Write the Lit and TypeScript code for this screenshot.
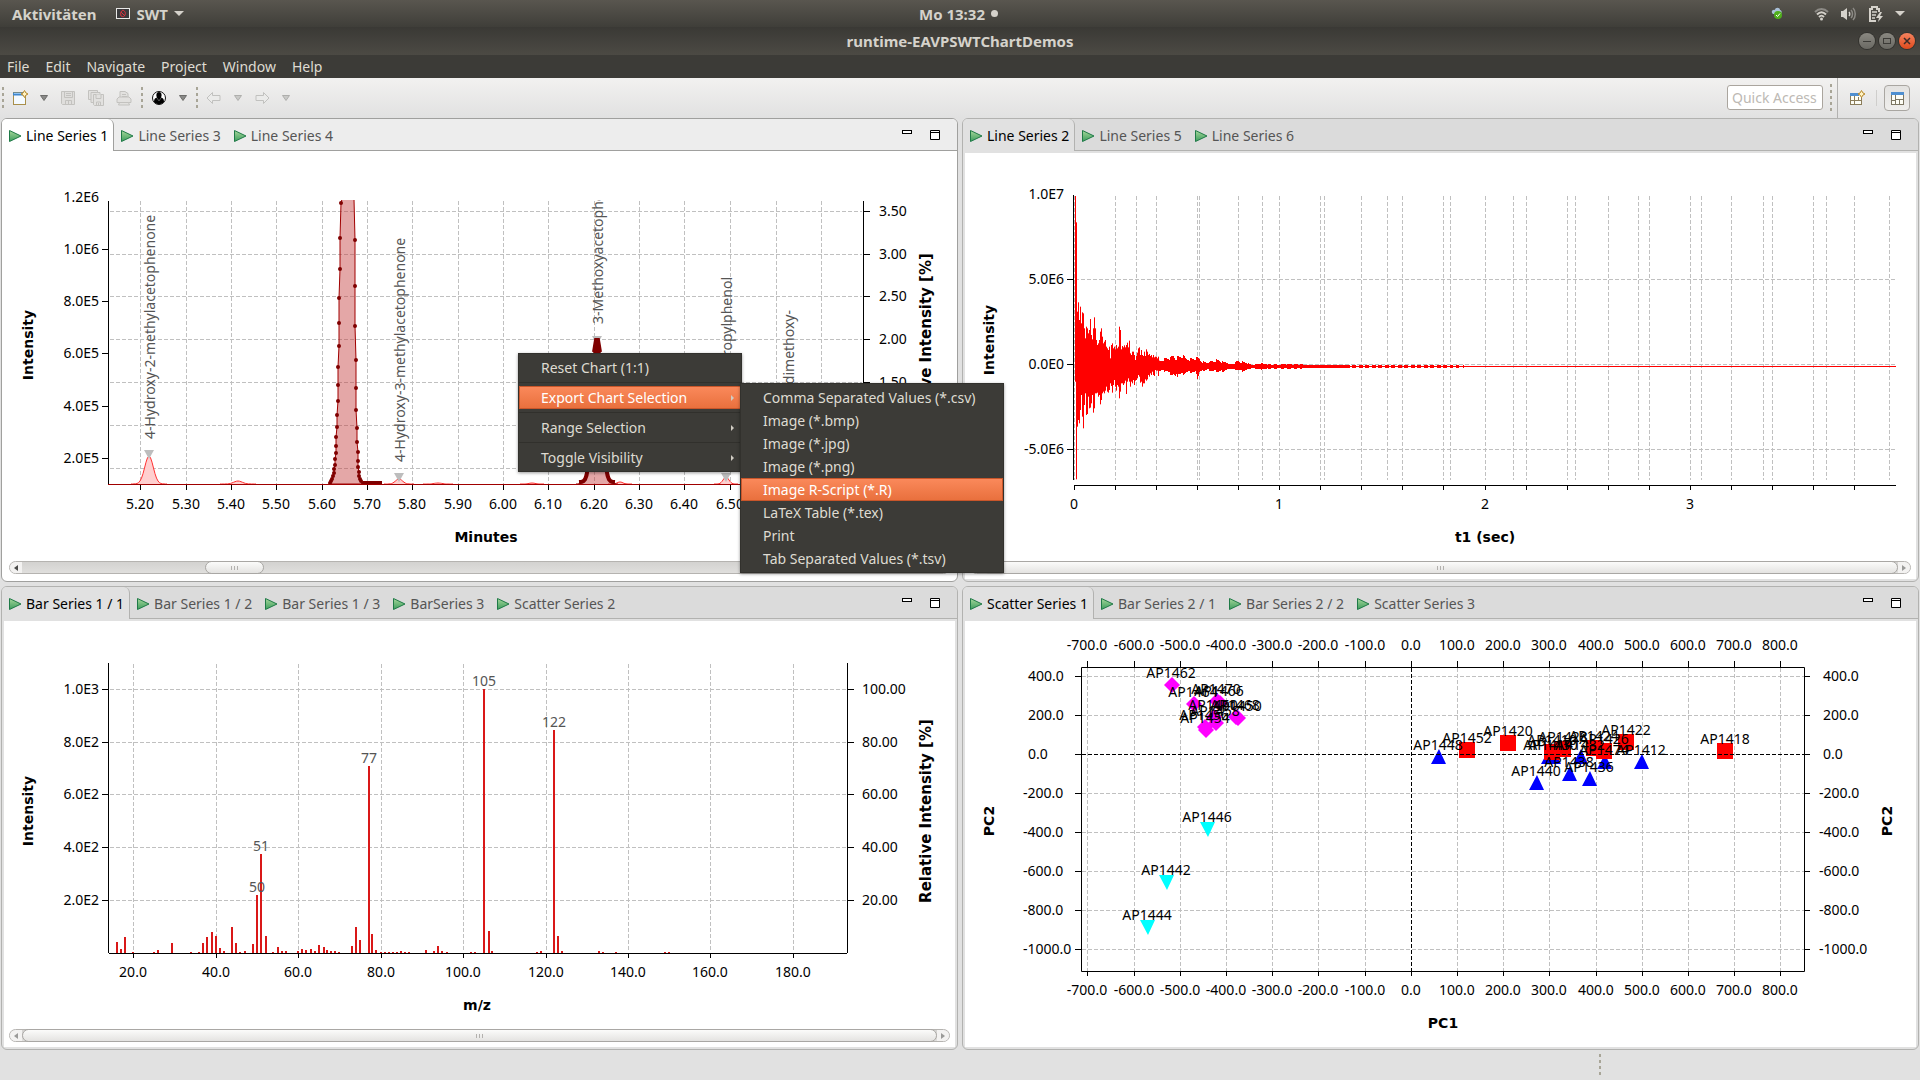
import { LitElement, html, svg, css, nothing } from "lit";
import type { TemplateResult, SVGTemplateResult } from "lit";
import { customElement } from "lit/decorators.js";
import { classMap } from "lit/directives/class-map.js";

type Pt = [number, number];

/* ---------- shared drawing helpers ---------- */

const vline = (x: number, y1: number, y2: number) => `M${x + 0.5} ${y1}V${y2}`;
const hline = (y: number, x1: number, x2: number) => `M${x1} ${y + 0.5}H${x2}`;
const verticals = (xs: number[], y1: number, y2: number) => xs.map((x) => vline(x, y1, y2)).join("");
const horizontals = (ys: number[], x1: number, x2: number) => ys.map((y) => hline(y, x1, x2)).join("");

const label = (x: number, y: number, text: string, cls = "mid") =>
  svg`<text class=${cls} x=${x} y=${y}>${text}</text>`;
const upright = (x: number, y: number, text: string, cls: string) =>
  svg`<text class=${cls} transform="translate(${x} ${y}) rotate(-90)">${text}</text>`;

const bell = (cx: number, top: number, base: number, spread: number) => {
  let d = `M${cx - spread * 3} ${base}`;
  for (let i = -12; i <= 12; i++) {
    const t = i / 4;
    d += `L${cx + t * spread} ${(base - (base - top) * Math.exp(-t * t)).toFixed(1)}`;
  }
  return d + `L${cx + spread * 3} ${base}`;
};

/* ---------- line chart: chromatogram ---------- */

const PEAK_LEFT: Pt[] = [
  [341, 203], [340, 238], [340, 269], [339, 298], [339, 323], [339, 346], [338, 367], [338, 385],
  [338, 401], [337, 415], [337, 427], [336, 437], [336, 446], [336, 453], [335, 459], [335, 465],
  [334, 469], [334, 473], [333, 476], [332, 479], [331, 481], [330, 483],
];
const PEAK_RIGHT: Pt[] = [
  [355, 240], [355, 286], [355, 326], [356, 360], [356, 388], [356, 410], [357, 428], [357, 442],
  [358, 452], [358, 461], [358, 467], [359, 472], [359, 476], [360, 479], [361, 481], [363, 483],
];
const toPath = (pts: Pt[]) => pts.map((p) => p.join(" ")).join("L");

const chromatogram = (): TemplateResult => {
  const xs = [140, 186, 231, 276, 322, 367, 412, 458, 503, 548, 594, 639, 684, 730, 776, 821];
  const ys = [211, 254, 296, 339, 382, 425, 468];
  const left: [string, number][] = [["1.0E6", 249], ["8.0E5", 301], ["6.0E5", 353], ["4.0E5", 406], ["2.0E5", 458]];
  const small: [number, number, number][] = [[149, 456, 6], [238, 481, 6], [399, 479, 5], [438, 483, 5], [532, 483, 4], [620, 482, 4], [726, 477, 4]];
  const flags: Pt[] = [[149, 450], [399, 473], [597, 336], [726, 473]];
  return html`<svg class="chart" viewBox="9 153 941 408" role="img" aria-label="Line Series 1">
    <clipPath id="plot1"><rect x="108" y="200" width="756" height="286" /></clipPath>
    <path class="grid" d=${verticals(xs, 201, 484) + horizontals(ys, 110, 862)} />
    <path class="axis" d=${vline(108, 201, 484) + vline(863, 201, 485) + hline(484, 109, 863) +
      verticals(xs, 485, 490) + horizontals(left.map((l) => l[1]), 102, 108) + horizontals(ys, 864, 870)} />
    <g clip-path="url(#plot1)">
      ${small.map(([x, y, w]) => svg`<path class="bump" d=${bell(x, y, 484, w)} />`)}
      <path class="peak" d="M330 484L${toPath([...PEAK_LEFT].reverse())}L342 199H354L${toPath(PEAK_RIGHT)}L365 484Z" />
      ${[...PEAK_LEFT, ...PEAK_RIGHT].map(([x, y]) => svg`<circle class="dot" cx=${x} cy=${y} r="2" />`)}
      <path class="thick" d="M363 483H382" />
      <path class="peak" d=${bell(597, 338, 484, 7)} />
      <path class="thick" d=${bell(597, 340, 482, 6)} />
      <path class="base" d="M108 484.500H864" />
    </g>
    ${flags.map(([x, y]) => svg`<path class="flag" d="M${x - 5} ${y}h10l-5 9z" />`)}
    <path class="thick" d="M594 352L596 340H598L600 352" />
    ${label(99, 202, "1.2E6", "end")}
    ${left.map(([t, y]) => label(99, y + 5, t, "end"))}
    ${xs.slice(0, 14).map((x, i) => label(x, 509, (5.2 + i / 10).toFixed(2)))}
    ${ys.map((y, i) => label(879, y + 5, (3.5 - i / 2).toFixed(2), "start"))}
    ${upright(155, 439, "4-Hydroxy-2-methylacetophenone", "note start")}
    ${upright(405, 462, "4-Hydroxy-3-methylacetophenone", "note start")}
    <g clip-path="url(#plot1)">${upright(603, 324, "3-Methoxyacetophenone", "note start")}</g>
    ${upright(732, 277, "propylphenol", "note end")}
    ${upright(794, 310, "dimethoxy-", "note end")}
    ${label(486, 542, "Minutes", "title")}
    ${upright(33, 345, "Intensity", "title")}
    ${upright(931, 345, "Relative Intensity [%]", "title wide")}
  </svg>`;
};

/* ---------- line chart: free induction decay ---------- */

/* Upper and lower reach of the signal, in thirds of a pixel from the baseline, one pair per pixel column. */
const FID_HEAD: Pt[] = [
  [510, 47], [431, 340], [163, 182], [191, 162], [138, 172], [178, 132], [128, 87], [161, 152], [158, 187], [113, 117],
  [83, 82], [118, 147], [113, 144], [98, 92], [108, 127], [141, 125], [93, 112], [80, 87], [113, 140], [146, 127],
  [113, 82], [78, 82], [63, 80], [68, 92], [78, 87], [103, 115], [113, 102], [88, 82], [68, 77], [73, 82],
  [78, 74], [58, 62], [53, 77], [48, 80], [58, 72], [23, 52], [63, 60], [68, 80], [53, 57], [58, 42],
  [50, 62], [63, 74], [53, 57], [58, 62], [118, 97], [108, 77], [50, 52], [60, 52], [56, 57], [62, 52],
  [56, 44], [63, 84], [70, 47], [56, 37], [76, 47], [38, 62], [33, 47], [43, 52], [43, 42], [33, 57],
  [18, 44], [30, 42], [40, 37], [53, 27], [56, 32], [33, 50], [48, 47], [33, 62], [30, 52], [43, 52],
  [30, 40], [50, 44], [43, 40], [33, 27], [36, 32], [30, 22], [33, 27], [26, 17], [33, 27], [26, 30],
  [28, 12], [28, 14], [23, 14], [28, 30], [16, 14],
];
/* Envelope of the fading part: x, upper and lower reach in thirds of a pixel. */
const FID_TAIL: [number, number, number][] = [
  [1159, 18, 14], [1163, 23, 14], [1166, 28, 14], [1170, 28, 25], [1173, 38, 27], [1175, 28, 42], [1178, 33, 24],
  [1182, 36, 27], [1186, 26, 20], [1191, 26, 19], [1196, 27, 20], [1197, 30, 39], [1199, 25, 20], [1202, 15, 14],
  [1207, 11, 10], [1212, 17, 15], [1218, 22, 17], [1222, 14, 16], [1227, 14, 11], [1229, 6, 6], [1234, 9, 8],
  [1237, 18, 12], [1242, 14, 15], [1246, 13, 12], [1249, 5, 5], [1262, 9, 8], [1272, 5, 5], [1290, 7, 6],
  [1310, 4, 4], [1345, 4, 4], [1350, 2, 2], [1450, 2, 2], [1480, 1, 1],
];

const fadingColumns = () => {
  let d = "";
  for (let i = 1; i < FID_TAIL.length; i++) {
    const [x0, u0, d0] = FID_TAIL[i - 1];
    const [x1, u1, d1] = FID_TAIL[i];
    for (let x = x0; x < x1; x++) {
      const t = (x - x0) / (x1 - x0);
      const jitter = 1 - ((x * 7919) % 13) / 30;
      const up = Math.round(((u0 + (u1 - u0) * t) * jitter) / 3);
      const down = Math.round(((d0 + (d1 - d0) * t) * jitter) / 3);
      d += `M${x + 0.5} ${366 - up}V${367 + down}`;
    }
  }
  return d;
};

const decay = (): TemplateResult => {
  const xs = [1074, 1115, 1156, 1197, 1238, 1279, 1320, 1361, 1402, 1443, 1485, 1526, 1567, 1608, 1649, 1690, 1731, 1772, 1813, 1854];
  const extra = [1136, 1199, 1262, 1324, 1387, 1450, 1513, 1575, 1638, 1701, 1763, 1826, 1889];
  const ys: [string, number][] = [["5.0E6", 279], ["0.0E0", 364], ["-5.0E6", 449]];
  const head = FID_HEAD.map(([u, d], i) => `M${1075.5 + i} ${366 - u / 3}V${366 + d / 3}`).join("");
  return html`<svg class="chart" viewBox="970 153 941 408" role="img" aria-label="Line Series 2">
    <path class="grid" d=${verticals([...xs, ...extra], 196, 480) + horizontals(ys.map((y) => y[1]), 1075, 1895)} />
    <path class="fid" d=${head + fadingColumns() + hline(366, 1075, 1896)} />
    <path class="axis" d=${vline(1073, 195, 480) + hline(485, 1074, 1896) + verticals(xs, 486, 490) +
      horizontals(ys.map((y) => y[1]), 1067, 1073)} />
    ${label(1064, 199, "1.0E7", "end")}
    ${ys.map(([t, y]) => label(1064, y + 5, t, "end"))}
    ${[0, 1, 2, 3].map((n) => label(xs[n * 5], 509, String(n)))}
    ${label(1485, 542, "t1 (sec)", "title")}
    ${upright(994, 340, "Intensity", "title")}
  </svg>`;
};

/* ---------- bar chart: mass spectrum ---------- */

const BARS: Pt[] = [
  [117, 11], [121, 4], [125, 16], [133, 1], [154, 1], [158, 3], [172, 10], [191, 1], [199, 1], [203, 10], [207, 16],
  [212, 21], [216, 17], [220, 5], [224, 2], [232, 26], [236, 10], [240, 1], [245, 2], [253, 9], [257, 58], [261, 99],
  [266, 17], [273, 1], [278, 6], [282, 2], [286, 2], [298, 2], [302, 4], [306, 3], [311, 4], [315, 2], [319, 8],
  [324, 6], [327, 3], [331, 2], [335, 2], [339, 1], [352, 7], [356, 26], [360, 13], [369, 187], [372, 19], [376, 3],
  [381, 1], [385, 1], [389, 1], [393, 1], [397, 1], [401, 2], [405, 1], [409, 1], [426, 3], [434, 2], [438, 7],
  [442, 2], [447, 1], [471, 1], [475, 1], [484, 264], [489, 22], [492, 2], [537, 1], [541, 2], [554, 223], [558, 17],
  [562, 2], [599, 2], [603, 1], [616, 1], [665, 1], [669, 1],
];

const spectrum = (): TemplateResult => {
  const xs = [133, 216, 298, 381, 463, 546, 628, 710, 793];
  const ys = [689, 742, 794, 847, 900];
  const left = ["1.0E3", "8.0E2", "6.0E2", "4.0E2", "2.0E2"];
  const tags: [string, number, number][] = [["50", 257, 892], ["51", 261, 851], ["77", 369, 763], ["105", 484, 686], ["122", 554, 727]];
  return html`<svg class="chart" viewBox="9 621 941 408" role="img" aria-label="Bar Series 1 / 1">
    <path class="grid" d=${verticals(xs, 664, 952) + horizontals(ys, 110, 846)} />
    ${BARS.map(([x, h]) => svg`<rect class="bar" x=${x - 1} y=${953 - h} width="2" height=${h} />`)}
    <path class="axis" d=${vline(108, 663, 953) + vline(847, 663, 953) + hline(953, 109, 847) + verticals(xs, 954, 958) +
      horizontals(ys, 102, 108) + horizontals(ys, 848, 854)} />
    ${tags.map(([t, x, y]) => label(x, y, t, "note mid"))}
    ${xs.map((x, i) => label(x, 977, (20 + i * 20).toFixed(1)))}
    ${ys.map((y, i) => label(99, y + 5, left[i], "end"))}
    ${ys.map((y, i) => label(862, y + 5, (100 - i * 20).toFixed(2), "start"))}
    ${label(477, 1010, "m/z", "title")}
    ${upright(33, 811, "Intensity", "title")}
    ${upright(931, 811, "Relative Intensity [%]", "title wide")}
  </svg>`;
};

/* ---------- scatter chart: principal components ---------- */

type Mark = [string, number, number];
const DOWN: Mark[] = [["AP1446", 1207, 829], ["AP1442", 1166, 882], ["AP1444", 1147, 927]];
const DIAMOND: Mark[] = [
  ["AP1462", 1171, 685], ["AP1464", 1193, 704], ["AP1470", 1216, 701], ["AP1466", 1219, 703], ["AP1460", 1213, 717],
  ["AP1468", 1235, 717], ["AP1450", 1237, 718], ["AP1458", 1215, 723], ["AP1456", 1204, 727], ["AP1454", 1205, 730],
];
const UP: Mark[] = [
  ["AP1448", 1438, 757], ["AP1440", 1536, 783], ["AP1438", 1569, 774], ["AP1436", 1589, 779], ["AP1412", 1641, 762],
  ["AP1432", 1580, 757], ["AP1474", 1604, 762], ["AP1414", 1548, 757], ["AP1430", 1553, 757],
];
const SQUARE: Mark[] = [
  ["AP1452", 1467, 750], ["AP1420", 1508, 743], ["AP1422", 1626, 742], ["AP1418", 1725, 751], ["AP1410", 1552, 752],
  ["AP1428", 1563, 749], ["AP1424", 1594, 748], ["AP1426", 1604, 751],
];

const scatter = (): TemplateResult => {
  const xs = [1087, 1134, 1180, 1226, 1272, 1318, 1365, 1411, 1457, 1503, 1549, 1596, 1642, 1688, 1734, 1780];
  const ys = [676, 715, 754, 793, 832, 871, 910, 949];
  const yText = (i: number) => (400 - i * 200).toFixed(1);
  const shape = (marks: Mark[], cls: string, d: string): SVGTemplateResult[] =>
    marks.map(([, x, y]) => svg`<path class=${cls} d="M${x} ${y}${d}" />`);
  return html`<svg class="chart" viewBox="970 621 941 421" role="img" aria-label="Scatter Series 1">
    <path class="grid" d=${verticals(xs, 668, 971) + horizontals(ys, 1082, 1804)} />
    ${shape(DOWN, "cyan", "m-7 -7h15l-7 15z")}
    ${shape(DIAMOND, "magenta", "m-7 0l8 -8l8 8l-8 8z")}
    ${shape(UP, "blue", "m-7 7h15l-7 -15z")}
    ${shape(SQUARE, "red", "m-8 -8h16v16h-16z")}
    <path class="zero" d=${vline(1411, 668, 971) + hline(754, 1082, 1804)} />
    <path class="axis" d=${"M1081.500 667.500H1804.500V971.500H1081.500Z" + verticals(xs, 661, 667) + verticals(xs, 972, 976) +
      horizontals(ys, 1075, 1081) + horizontals(ys, 1805, 1810)} />
    ${[...DOWN, ...DIAMOND, ...UP, ...SQUARE].map(([t, x, y]) => label(x, y - 7, t))}
    ${xs.map((x, i) => label(x, 650, (i * 100 - 700).toFixed(1)))}
    ${xs.map((x, i) => label(x, 995, (i * 100 - 700).toFixed(1)))}
    ${ys.map((y, i) => label(i < 3 ? 1028 : 1023, y + 5, yText(i), "start"))}
    ${ys.map((y, i) => label(i < 3 ? 1823 : 1819, y + 5, yText(i), "start"))}
    ${label(1443, 1028, "PC1", "title")}
    ${upright(994, 821, "PC2", "title")}
    ${upright(1892, 821, "PC2", "title")}
  </svg>`;
};

/* ---------- icons ---------- */

const icon = (body: SVGTemplateResult, w = 16, h = 16) =>
  html`<svg class="icon" width=${w} height=${h} viewBox="0 0 ${w} ${h}" aria-hidden="true">${body}</svg>`;

const PLUS = svg`<path d="M12.500 .5l1.500 2.500 2 1-2 1-1.500 2.500-1.500-2.500-2-1 2-1z" fill="#fff3c4" stroke="#b8892a" />`;

const icons = {
  play: icon(svg`<path d="M.5 .5V11.500L12 6z" fill="url(#pg)" stroke="#1f7a47" />
    <linearGradient id="pg" x1="0" y1="0" x2="0" y2="1"><stop offset="0" stop-color="#a5d69a" /><stop offset="1" stop-color="#3c9d5d" /></linearGradient>`, 13, 12),
  caret: icon(svg`<path d="M1.500 .5h7L5 5.500z" fill="#8a8a88" stroke="#6d6d6b" />`, 10, 6),
  caretOff: icon(svg`<path d="M1.500 .5h7L5 5.500z" fill="#c9c9c7" stroke="#aeaeac" />`, 10, 6),
  fresh: icon(svg`<rect x="1.500" y="2.500" width="12" height="12" fill="#f4faff" stroke="#a98f4a" />
    <path d="M1 2.500h10v3H1z" fill="#3f87cf" /><path d="M2 3.500h8" stroke="#8fc2f2" />${PLUS}`),
  save: icon(svg`<g fill="none" stroke="#c3c2bf"><path d="M1.500 1.500h13v13h-12l-1-1z" fill="#dfdedc" />
    <path d="M4.500 1.500v6h8v-6M6 3.500h5M6 5.500h5M5.500 14.500v-4h6v4M8.500 11v3" /></g>`),
  saveAll: icon(svg`<g fill="#e2e1df" stroke="#c3c2bf"><path d="M.5 .5h9v9h-9z" /><path d="M3 2.500h9v10h-9z" /><path d="M5.500 4.500h10v11h-9l-1-1z" />
    <path d="M8 4.500v4h5v-4M8.500 15v-3h4v3M10.500 13v2" /></g>`),
  print: icon(svg`<g fill="#e2e1df" stroke="#c3c2bf"><path d="M4 7.500v-6h5l3 2v4" /><path d="M6 4.500h4M6 6.500h5" />
    <path d="M1 9l2-2h10l2 2v3.500h-14z" /><path d="M3.500 12.500h9l1 2.500h-11z" /></g>`),
  user: icon(svg`<circle cx="8" cy="8" r="6.500" fill="#fff" stroke="#111" />
    <path d="M3 12c0-3 1-4 3-4.500C5 6 5 2 8 2s3 4 2 5.500c2 .5 3 1.500 3 4.500-3 3-7 3-10 0z" fill="#000" />
    <path d="M6 8l2 3 2-3" fill="none" stroke="#555" />`),
  back: icon(svg`<path d="M1 8l5.500-5.500v3h7.500v5H6.500v3z" fill="#ebebea" stroke="#c1c1bf" />`),
  forward: icon(svg`<path d="M15 8L9.500 2.500v3H2v5h7.500v3z" fill="#ebebea" stroke="#c1c1bf" />`),
  openPersp: icon(svg`<rect x="1.500" y="3.500" width="11" height="11" fill="#fdfdf5" stroke="#8b7d5a" />
    <path d="M1 3h9v3H1z" fill="#4f8fd0" /><path d="M5.500 6v8M1.500 10.500h11M9.500 7v3" stroke="#8b7d5a" />${PLUS}`),
  persp: icon(svg`<rect x=".5" y=".5" width="12" height="12" fill="#fdfdf5" stroke="#7d7763" />
    <path d="M0 0h13v3H0z" fill="#4f8fd0" /><path d="M4.500 3v9M8.500 7v5M4.500 7.500h8M0 8.500h4" stroke="#7d7763" />`, 13, 13),
  min: icon(svg`<rect x=".5" y=".5" width="9" height="3" fill="#fff" stroke="#000" />`, 10, 10),
  max: icon(svg`<path d="M.5 .5h9v9h-9zM0 2.500h10" fill="#fff" stroke="#000" />`, 10, 10),
  app: icon(svg`<rect x=".5" y=".5" width="13" height="10" fill="#3a3a3c" stroke="#e8e8e6" />
    <path d="M7 2c-2 1-3 3-2 6 2 1 3 1 4-1s0-4-2-5zM5 4l4 4" fill="none" stroke="#d8323c" />`, 14, 11),
  drop: icon(svg`<path d="M0 0h10L5 5z" fill="#d5d2cb" />`, 10, 5),
  cloud: icon(svg`<path d="M1 6c-1-3 2-4 3-3 0-3 5-3 5 0 2 0 2 3 1 4H2z" fill="#a9c0d8" /><circle cx="7" cy="8" r="4" fill="#4fae1c" />
    <path d="M5 8l1.500 1.500L9 6.500" fill="none" stroke="#fff" />`, 12, 13),
  wifi: icon(svg`<g fill="none" stroke-width="2"><path d="M1 5c4-4 9-4 13 0" stroke="#8c8a85" /><path d="M3 7.500c3-3 6-3 9 0M5 10c2-2 3-2 5 0" stroke="#d5d2cb" /></g>
    <circle cx="7.500" cy="12" r="1.500" fill="#d5d2cb" />`, 15, 14),
  sound: icon(svg`<path d="M1 4h2l4-3v12l-4-3H1z" fill="#d5d2cb" /><path d="M9 5c1 1 1 3 0 4" fill="none" stroke="#d5d2cb" stroke-width="1.500" />
    <path d="M11 3c2 2 2 6 0 8M13 1c3 3 3 9 0 12" fill="none" stroke="#8c8a85" stroke-width="1.500" />`, 16, 14),
  battery: icon(svg`<g transform="translate(2 0)"><path d="M7 15H1V3h2V1h5v2h2v3" fill="none" stroke="#d5d2cb" stroke-width="2" />
    <path d="M3 6h5M3 9h4M3 12h3" stroke="#d5d2cb" stroke-width="1.500" /><path d="M11 6L7 12h3l-1 4 5-6h-3l2-4z" fill="#d5d2cb" /></g>`, 17, 16),
  arrow: icon(svg`<path d="M0 0v6l3-3z" fill="#d0ccc3" />`, 3, 6),
  left: icon(svg`<path d="M4 0v6L0 3z" fill="currentColor" />`, 4, 6),
  right: icon(svg`<path d="M0 0v6l4-3z" fill="currentColor" />`, 4, 6),
  wmin: icon(svg`<path d="M4 8.500h8" stroke="#3c3b37" stroke-width="1" />`),
  wmax: icon(svg`<rect x="4.500" y="5.500" width="7" height="5" fill="none" stroke="#3c3b37" />`),
  wclose: icon(svg`<path d="M5 5l6 6M11 5l-6 6" stroke="#3c2b27" stroke-width="1.500" />`),
};

/* ---------- application ---------- */

interface View {
  tabs: string[];
  active?: boolean;
  scroll?: "zoomed" | "full";
  chart: () => TemplateResult;
}

const VIEWS: View[] = [
  { tabs: ["Line Series 1", "Line Series 3", "Line Series 4"], active: true, scroll: "zoomed", chart: chromatogram },
  { tabs: ["Line Series 2", "Line Series 5", "Line Series 6"], scroll: "full", chart: decay },
  { tabs: ["Bar Series 1 / 1", "Bar Series 1 / 2", "Bar Series 1 / 3", "BarSeries 3", "Scatter Series 2"], scroll: "full", chart: spectrum },
  { tabs: ["Scatter Series 1", "Bar Series 2 / 1", "Bar Series 2 / 2", "Scatter Series 3"], chart: scatter },
];

const EXPORTS = [
  "Comma Separated Values (*.csv)", "Image (*.bmp)", "Image (*.jpg)", "Image (*.png)", "Image R-Script (*.R)",
  "LaTeX Table (*.tex)", "Print", "Tab Separated Values (*.tsv)",
];

@customElement("app-root")
export class AppRoot extends LitElement {
  static styles = css`
    :host {
      display: flex;
      flex-direction: column;
      height: 100vh;
      position: relative;
      overflow: hidden;
      background: #e1e1e1;
      font: 14px/20px "Noto Sans", sans-serif;
      color: #000;
    }
    * { box-sizing: border-box; }
    button { font: inherit; color: inherit; border: 0; background: none; padding: 0; margin: 0; }
    .icon { display: block; flex: none; }

    .topbar {
      display: grid;
      grid-template-columns: 1fr auto 1fr;
      align-items: center;
      height: 27px;
      padding: 0 15px 0 12px;
      background: linear-gradient(#59564f, #3f3e39);
      color: #d5d2cb;
      font-size: 15px;
      font-weight: 700;
    }
    .topbar button { display: flex; align-items: center; gap: 6px; }
    .apps, .tray { display: flex; align-items: center; }
    .apps { gap: 20px; }
    .clock::after { content: ""; width: 7px; height: 7px; border-radius: 4px; background: #d5d2cb; }
    .tray { justify-content: flex-end; gap: 11px; }
    .tray .sync { margin-right: 20px; }
    .titlebar {
      display: grid;
      grid-template-columns: 1fr auto 1fr;
      align-items: center;
      height: 28px;
      padding: 0 5px;
      background: linear-gradient(#3a3935, #4c4a44);
      color: #d5d2cb;
      font-size: 15px;
      font-weight: 700;
    }
    .titlebar h1 { font: inherit; margin: 0; grid-column: 2; }
    .wbuttons { display: flex; justify-content: flex-end; gap: 4px; }
    .wbuttons button { width: 16px; height: 16px; border-radius: 8px; background: linear-gradient(#8a8881, #6a6963); box-shadow: 0 0 0 1px #33322e; }
    .wbuttons .close { background: linear-gradient(#f5835f, #df4a1c); }

    .menubar { display: flex; gap: 16px; height: 23px; padding: 0 7px; align-items: center; background: #3c3b37; color: #dfdbd2; }

    .toolbar {
      display: flex;
      align-items: center;
      height: 40px;
      padding-right: 10px;
      background: linear-gradient(#f2f1f0, #e1e1e1);
    }
    .tool { width: 28px; height: 28px; display: grid; place-items: center; }
    .tool.drop { width: 20px; }
    .handle { width: 7px; height: 22px; display: grid; justify-content: center; }
    .handle::before { content: ""; width: 2px; background: repeating-linear-gradient(#a8a597 0 3px, transparent 3px 6px); }
    .handle.first { width: 6px; }
    .handle.tall { height: 28px; margin-left: 4px; }
    .spacer { flex: 1; }
    .quick {
      width: 96px;
      height: 25px;
      margin-bottom: 2px;
      border: 1px solid #aaa59e;
      border-radius: 3px;
      background: #fff;
      padding: 0 4px;
      font: inherit;
    }
    .quick::placeholder { color: #bdb9b4; opacity: 1; }
    .perspectives { display: flex; align-items: center; align-self: stretch; margin-left: 3px; padding-left: 5px; border-left: 1px solid #b3b2b0; }
    .rule { width: 1px; height: 16px; background: #cfcecc; margin: 0 7px 0 5px; }
    .tool.pressed { width: 26px; height: 26px; border: 1px solid #a9a6a1; border-radius: 4px; background: linear-gradient(#e3e2e0, #efeeec); }

    .workbench {
      flex: 1;
      min-height: 0;
      display: grid;
      grid-template: repeat(2, minmax(0, 1fr)) / repeat(2, minmax(0, 1fr));
      gap: 4px;
      padding: 0 1px;
    }
    .panel { display: flex; flex-direction: column; min-height: 0; border: 1px solid #b2b2b0; border-radius: 6px; overflow: hidden; background: #e1e1e1; }
    .panel.active { background: #fff; border-color: #a0a09e; }
    .tabs { display: flex; height: 32px; padding-right: 17px; border-bottom: 1px solid #b2b2b0; background: #dbdbdb; }
    .active .tabs { background: #ededed; border-color: #a0a09e; }
    .tab { display: flex; align-items: center; gap: 4px; padding: 2px 6px 0 7px; color: #555; white-space: nowrap; }
    .tab.selected { color: #000; background: #e1e1e1; border-right: 1px solid #b2b2b0; border-top-right-radius: 6px; padding-right: 5px; margin-bottom: -1px; }
    .active .tab.selected { background: #fff; border-color: #a0a09e; }
    .wins { display: flex; gap: 18px; margin-left: auto; padding-top: 11px; align-items: flex-start; }
    .body { flex: 1; min-height: 0; display: flex; flex-direction: column; margin: 2px; padding: 0 5px 5px; background: #fff; }

    .scroll { display: flex; height: 13px; border: 1px solid #b5b3b0; border-radius: 7px; background: linear-gradient(#d3d2d0, #e0dfdd); color: #9a9a98; }
    .scroll .step { width: 12px; display: grid; place-items: center; background: #f3f2f1; }
    .scroll .step:first-child { border-radius: 7px 0 0 7px; }
    .scroll .step:last-child { border-radius: 0 7px 7px 0; }
    .track { flex: 1; display: flex; }
    .thumb { display: flex; align-items: center; justify-content: center; gap: 2px; width: 100%; margin: -1px 0; border: 1px solid #a9a7a4; border-radius: 7px; background: linear-gradient(#fbfbfa, #e4e3e1); }
    .thumb i { width: 1px; height: 4px; background: #b3b1ae; }
    .zoomed { color: #4a4a48; }
    .zoomed .thumb { width: 59px; margin-left: 20%; }

    .statusbar { display: flex; height: 30px; align-items: center; padding-left: calc(83% + 3px); }

    .menu {
      position: absolute;
      display: flex;
      flex-direction: column;
      padding: 2px 0;
      border: 1px solid #32312d;
      background: #3c3b37;
      color: #dfdbd2;
      box-shadow: 0 1px 3px #0006;
    }
    .context { left: 518px; top: 353px; width: 224px; }
    .export { left: 740px; top: 383px; width: 264px; }
    .item { display: flex; align-items: center; justify-content: space-between; height: 23px; padding: 0 7px 0 22px; text-align: left; white-space: nowrap; }
    .item.on { color: #fff; background: linear-gradient(#fb8a5c, #e86f3c); box-shadow: inset 0 0 0 1px #c9562a; }
    .menu hr { width: 100%; height: 1px; margin: 3px 0; border: 0; background: #31302c; }

    .chart { display: block; flex: 1; min-height: 0; width: 100%; }
    .chart text { font: 14px "Noto Sans", sans-serif; fill: #000; }
    .chart .mid, .chart .title { text-anchor: middle; }
    .chart .end { text-anchor: end; }
    .chart .note { fill: #555; }
    .chart .title { font: bold 14px "DejaVu Sans", sans-serif; }
    .chart .wide { font-size: 15px; }
    .grid { fill: none; stroke: #c0c0c0; stroke-dasharray: 4 2; }
    .zero { fill: none; stroke: #000; stroke-dasharray: 4 2; }
    .axis { fill: none; stroke: #000; }
    .bump { fill: #ffcfcf; stroke: #ff3030; }
    .peak { fill: #c33c3c; fill-opacity: 0.45; stroke: #a00000; stroke-width: 1; }
    .dot { fill: #7f0000; }
    .thick { fill: none; stroke: #7f0000; stroke-width: 4; }
    .base { stroke: #a00000; }
    .flag { fill: #bdbdbd; }
    .fid { stroke: #f00; }
    .bar { fill: #d91818; }
    .cyan { fill: #0ff; }
    .magenta { fill: #f0f; }
    .blue { fill: #00f; }
    .red { fill: #f00; }
  `;

  private panel(view: View) {
    return html`<section class=${classMap({ panel: true, active: !!view.active })}>
      <div class="tabs" role="tablist">
        ${view.tabs.map((name, i) => html`<button role="tab" aria-selected=${i === 0} class=${classMap({ tab: true, selected: i === 0 })}>${icons.play}<span>${name}</span></button>`)}
        <div class="wins">
          <button aria-label="Minimize">${icons.min}</button>
          <button aria-label="Maximize">${icons.max}</button>
        </div>
      </div>
      <div class="body">
        ${view.chart()}
        ${view.scroll
          ? html`<div class="scroll ${view.scroll}">
              <button class="step" aria-label="Scroll left">${icons.left}</button>
              <div class="track"><div class="thumb"><i></i><i></i><i></i></div></div>
              <button class="step" aria-label="Scroll right">${icons.right}</button>
            </div>`
          : nothing}
      </div>
    </section>`;
  }

  private tool(name: string, image: TemplateResult, drop = false) {
    return html`<button class=${classMap({ tool: true, drop })} aria-label=${name}>${image}</button>`;
  }

  render() {
    return html`
      <header class="topbar">
        <div class="apps">
          <button>Aktivitäten</button>
          <button>${icons.app}SWT${icons.drop}</button>
        </div>
        <button class="clock">Mo 13:32</button>
        <div class="tray"><span class="sync">${icons.cloud}</span>${icons.wifi}${icons.sound}${icons.battery}${icons.drop}</div>
      </header>
      <div class="titlebar">
        <h1>runtime-EAVPSWTChartDemos</h1>
        <div class="wbuttons">
          <button aria-label="Minimize window">${icons.wmin}</button>
          <button aria-label="Maximize window">${icons.wmax}</button>
          <button class="close" aria-label="Close window">${icons.wclose}</button>
        </div>
      </div>
      <nav class="menubar">
        ${["File", "Edit", "Navigate", "Project", "Window", "Help"].map((m) => html`<button>${m}</button>`)}
      </nav>
      <div class="toolbar" role="toolbar">
        <span class="handle first"></span>
        ${this.tool("New", icons.fresh)}${this.tool("New menu", icons.caret, true)}
        ${this.tool("Save", icons.save)}${this.tool("Save all", icons.saveAll)}${this.tool("Print", icons.print)}
        <span class="handle"></span>
        ${this.tool("Account", icons.user)}${this.tool("Account menu", icons.caret, true)}
        <span class="handle"></span>
        ${this.tool("Back", icons.back)}${this.tool("Back menu", icons.caretOff, true)}
        ${this.tool("Forward", icons.forward)}${this.tool("Forward menu", icons.caretOff, true)}
        <span class="spacer"></span>
        <input class="quick" type="text" placeholder="Quick Access" aria-label="Quick Access" />
        <span class="handle tall"></span>
        <div class="perspectives">
          ${this.tool("Open perspective", icons.openPersp)}
          <span class="rule"></span>
          <button class="tool pressed" aria-label="Resource perspective">${icons.persp}</button>
        </div>
      </div>
      <main class="workbench">${VIEWS.map((v) => this.panel(v))}</main>
      <footer class="statusbar"><span class="handle"></span></footer>

      <div class="menu context" role="menu">
        <button class="item" role="menuitem">Reset Chart (1:1)</button>
        <hr />
        <button class="item on" role="menuitem">Export Chart Selection${icons.arrow}</button>
        <hr />
        <button class="item" role="menuitem">Range Selection${icons.arrow}</button>
        <hr />
        <button class="item" role="menuitem">Toggle Visibility${icons.arrow}</button>
      </div>
      <div class="menu export" role="menu">
        ${EXPORTS.map((name, i) => html`<button class=${classMap({ item: true, on: i === 4 })} role="menuitem">${name}</button>`)}
      </div>
    `;
  }
}
